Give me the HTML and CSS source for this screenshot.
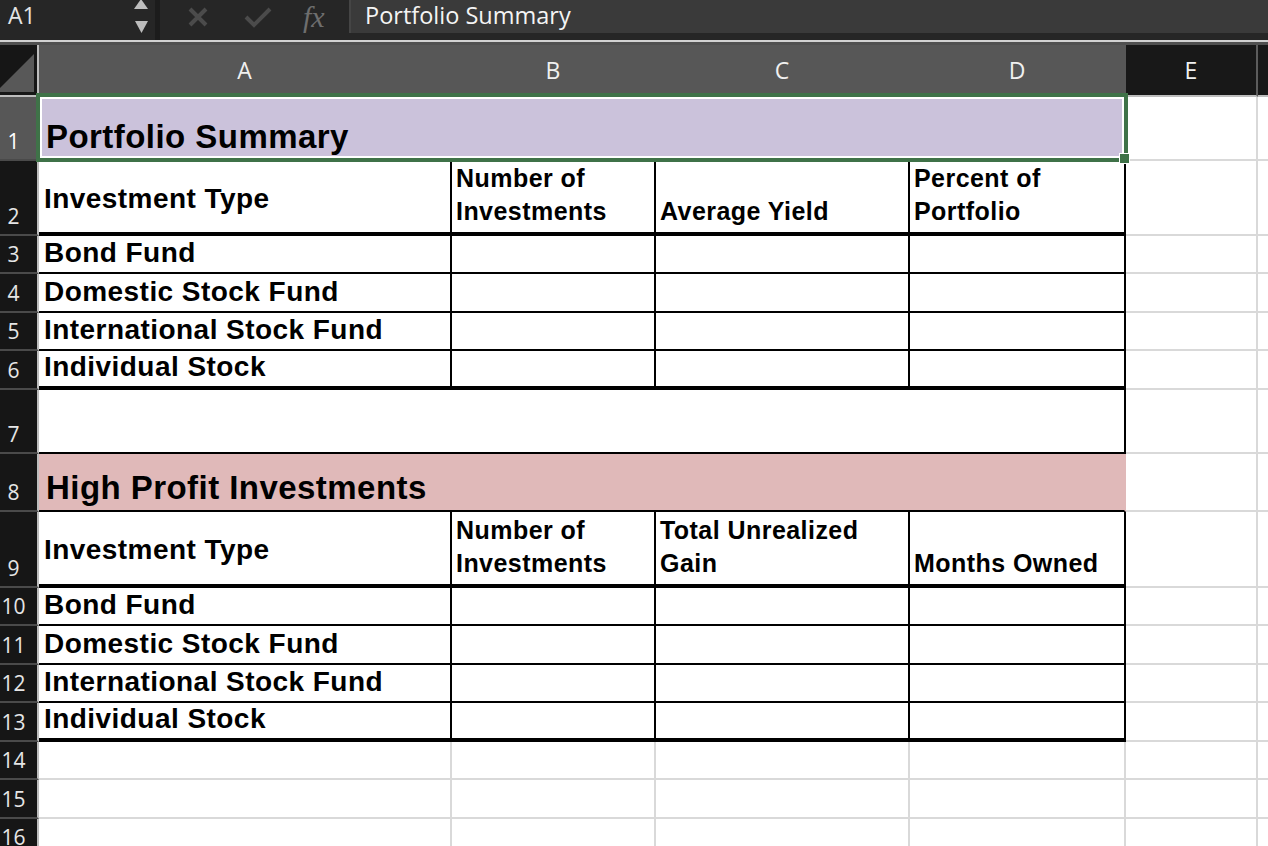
FILE: index.html
```html
<!DOCTYPE html>
<html lang="en">
<head>
  <meta charset="UTF-8">
  <meta name="viewport" content="width=device-width, initial-scale=1.0">
  <title>Portfolio Summary</title>
  <link rel="stylesheet" href="styles.css">
</head>
<body>
  <div class="toolbar">
    <div class="namebox">A1</div>
    <svg class="spin" width="27" height="33" viewBox="0 0 27 33">
      <polygon points="6,9 13,-1 20,9"/>
      <polygon points="7,21 20,21 13.5,33"/>
    </svg>
    <div class="divider"></div>
    <div class="tools">
      <svg class="cancel" width="20" height="20" viewBox="0 0 20 20"><path d="M2 2 L18 18 M18 2 L2 18"/></svg>
      <svg class="enter" width="28" height="22" viewBox="0 0 28 22"><path d="M2 11 L10 19 L26 3"/></svg>
      <span class="fx">fx</span>
    </div>
    <div class="formula">Portfolio Summary</div>
  </div>
  <div class="rule"></div>

  <div class="sheet">
    <div class="corner">
      <svg width="37" height="50" viewBox="0 0 37 50"><polygon points="0,43 34,9 34,47 0,47"/></svg>
    </div>
    <div class="ch sel">A</div>
    <div class="ch sel">B</div>
    <div class="ch sel">C</div>
    <div class="ch sel">D</div>
    <div class="ch">E</div>
    <div class="ch"></div>

    <!-- row 1 -->
    <div class="rh sel">1</div>
    <div class="cell span lavender title">Portfolio Summary</div>
    <div class="cell"></div>
    <div class="cell"></div>

    <!-- row 2 -->
    <div class="rh">2</div>
    <div class="cell box end name middle">Investment Type</div>
    <div class="cell box end head"><span>Number of<br>Investments</span></div>
    <div class="cell box end head"><span>Average Yield</span></div>
    <div class="cell box end head"><span>Percent of<br>Portfolio</span></div>
    <div class="cell"></div>
    <div class="cell"></div>

    <!-- rows 3-6 -->
    <div class="rh">3</div>
    <div class="cell box name">Bond Fund</div>
    <div class="cell box"></div>
    <div class="cell box"></div>
    <div class="cell box"></div>
    <div class="cell"></div>
    <div class="cell"></div>

    <div class="rh">4</div>
    <div class="cell box name">Domestic Stock Fund</div>
    <div class="cell box"></div>
    <div class="cell box"></div>
    <div class="cell box"></div>
    <div class="cell"></div>
    <div class="cell"></div>

    <div class="rh">5</div>
    <div class="cell box name">International Stock Fund</div>
    <div class="cell box"></div>
    <div class="cell box"></div>
    <div class="cell box"></div>
    <div class="cell"></div>
    <div class="cell"></div>

    <div class="rh">6</div>
    <div class="cell box end name">Individual Stock</div>
    <div class="cell box end"></div>
    <div class="cell box end"></div>
    <div class="cell box end"></div>
    <div class="cell"></div>
    <div class="cell"></div>

    <!-- row 7 -->
    <div class="rh">7</div>
    <div class="cell span box"></div>
    <div class="cell"></div>
    <div class="cell"></div>

    <!-- row 8 -->
    <div class="rh">8</div>
    <div class="cell span pink title">High Profit Investments</div>
    <div class="cell"></div>
    <div class="cell"></div>

    <!-- row 9 -->
    <div class="rh">9</div>
    <div class="cell box end name middle">Investment Type</div>
    <div class="cell box end head"><span>Number of<br>Investments</span></div>
    <div class="cell box end head"><span>Total Unrealized<br>Gain</span></div>
    <div class="cell box end head"><span>Months Owned</span></div>
    <div class="cell"></div>
    <div class="cell"></div>

    <!-- rows 10-13 -->
    <div class="rh">10</div>
    <div class="cell box name">Bond Fund</div>
    <div class="cell box"></div>
    <div class="cell box"></div>
    <div class="cell box"></div>
    <div class="cell"></div>
    <div class="cell"></div>

    <div class="rh">11</div>
    <div class="cell box name">Domestic Stock Fund</div>
    <div class="cell box"></div>
    <div class="cell box"></div>
    <div class="cell box"></div>
    <div class="cell"></div>
    <div class="cell"></div>

    <div class="rh">12</div>
    <div class="cell box name">International Stock Fund</div>
    <div class="cell box"></div>
    <div class="cell box"></div>
    <div class="cell box"></div>
    <div class="cell"></div>
    <div class="cell"></div>

    <div class="rh">13</div>
    <div class="cell box end name">Individual Stock</div>
    <div class="cell box end"></div>
    <div class="cell box end"></div>
    <div class="cell box end"></div>
    <div class="cell"></div>
    <div class="cell"></div>

    <!-- empty rows -->
    <div class="rh">14</div>
    <div class="cell"></div>
    <div class="cell"></div>
    <div class="cell"></div>
    <div class="cell"></div>
    <div class="cell"></div>
    <div class="cell"></div>

    <div class="rh">15</div>
    <div class="cell"></div>
    <div class="cell"></div>
    <div class="cell"></div>
    <div class="cell"></div>
    <div class="cell"></div>
    <div class="cell"></div>

    <div class="rh">16</div>
    <div class="cell"></div>
    <div class="cell"></div>
    <div class="cell"></div>
    <div class="cell"></div>
    <div class="cell"></div>
    <div class="cell"></div>

    <div class="selection"><div class="handle"></div></div>
  </div>
</body>
</html>
```

FILE: styles.css
```css
* {
  box-sizing: border-box;
}

html, body {
  margin: 0;
  padding: 0;
  overflow: hidden;
}

body {
  width: 1268px;
  height: 846px;
  background-color: #fff;
  font-family: "Open Sans", sans-serif;
}

/* formula bar */
.toolbar {
  display: flex;
  height: 40px;
  background-color: #262626;
}

.namebox {
  width: 128px;
  padding-left: 8px;
  font-size: 23px;
  line-height: 31px;
  color: #e4e4e4;
}

.spin {
  fill: #bdbdbd;
}

.divider {
  width: 5px;
  background-color: #1c1c1c;
}

.tools {
  width: 189px;
  height: 33px;
  display: flex;
  align-items: center;
}

.tools svg path {
  fill: none;
  stroke: #4b4b4b;
  stroke-width: 4;
}

.cancel {
  margin-left: 28px;
}

.enter {
  margin-left: 36px;
}

.fx {
  margin-left: 31px;
  font-family: "Liberation Serif", serif;
  font-style: italic;
  font-size: 30px;
  line-height: 30px;
  color: #6e6e6e;
}

.formula {
  flex: 1;
  height: 33px;
  padding-left: 14px;
  background-color: #3a3a3a;
  border-left: 2px solid #454545;
  font-size: 23.5px;
  line-height: 31px;
  color: #f4f4f4;
}

.rule {
  height: 5px;
  border-top: 2px solid #d2d2d2;
  background-color: #505050;
}

/* sheet grid */
.sheet {
  position: relative;
  display: grid;
  grid-template-columns: 39px 413px 204px 254px 216px 132px 132px;
  grid-template-rows: 52px 64px 75px 38px 39px 38px 39px 64px 58px 76px 38px 39px 38px 39px 38px 39px 38px;
}

.corner {
  background-color: #161616;
  border-right: 2px solid #bdbdbd;
  border-bottom: 2px solid #bdbdbd;
  fill: #585858;
}

.ch {
  display: flex;
  align-items: center;
  justify-content: center;
  font-size: 23px;
  color: #f0f0f0;
  background-color: #181818;
  border-right: 2px solid #5c5c5c;
  border-bottom: 2px solid #bdbdbd;
}

.ch.sel {
  background-color: #575757;
  border-right-color: #575757;
}

.rh {
  display: flex;
  align-items: flex-end;
  justify-content: center;
  padding: 0 10px 7px 0;
  font-size: 21px;
  line-height: 21px;
  color: #e6e6e6;
  background-color: #161616;
  border-right: 2px solid #bdbdbd;
  border-bottom: 2px solid #4a4a4a;
}

.rh.sel {
  background-color: #575757;
  color: #fff;
}

.cell {
  display: flex;
  align-items: flex-end;
  padding: 0 3px 5px 4px;
  background-color: #fff;
  border-right: 2px solid #d9d9d9;
  border-bottom: 2px solid #d9d9d9;
  font-family: "Liberation Sans", Arial, sans-serif;
  font-weight: bold;
  font-size: 28px;
  line-height: 28px;
  letter-spacing: 0.45px;
  color: #000;
  white-space: nowrap;
}

.cell.name {
  padding-left: 5px;
}

.box {
  border-color: #000;
}

.end {
  border-bottom-width: 4px;
}

.span {
  grid-column: span 4;
}

.title {
  padding: 0 5px 6px 7px;
  font-size: 33px;
  line-height: 33px;
  letter-spacing: 0.45px;
}

.lavender {
  background-color: #cbc2db;
  border-color: #cbc2db;
}

.pink {
  background-color: #e0b9b9;
  border-right-color: #e0b9b9;
  border-bottom-color: #000;
}

.head {
  padding-bottom: 4px;
  font-size: 25px;
  line-height: 33px;
  letter-spacing: 0.45px;
}

.middle {
  align-items: center;
  padding-top: 4px;
  padding-bottom: 0;
}

/* active selection A1:D1 */
.selection {
  position: absolute;
  left: 36px;
  top: 48px;
  width: 1092px;
  height: 69px;
  border: 4px solid #3f7248;
  box-shadow: inset 0 0 0 2px #fff;
}

.handle {
  position: absolute;
  right: -6px;
  bottom: -6px;
  width: 11px;
  height: 11px;
  background-color: #3f7248;
  border: 1px solid #fff;
}
```
